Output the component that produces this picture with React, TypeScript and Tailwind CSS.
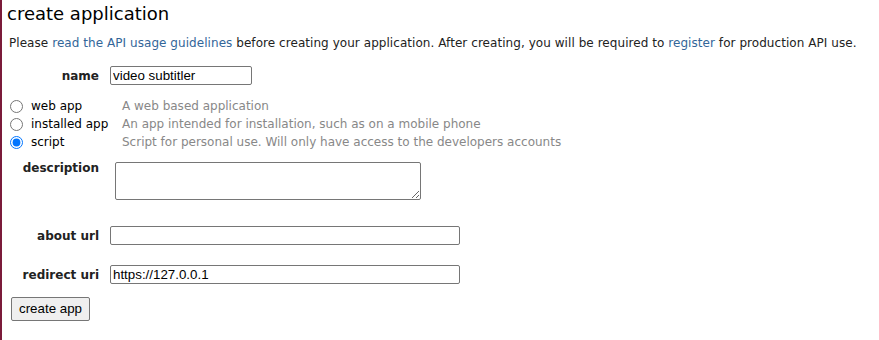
import React from "react";

const label = "w-[97px] shrink-0 text-right text-[12px] font-bold text-[#222]";
const field =
  "h-[19px] border border-[#767676] rounded-[2px] bg-white px-[2px] text-[13.33px] text-black font-['Liberation_Sans',Arial,sans-serif] outline-none";

const kinds = [
  { id: "web", name: "web app", hint: "A web based application" },
  { id: "installed", name: "installed app", hint: "An app intended for installation, such as on a mobile phone" },
  { id: "script", name: "script", hint: "Script for personal use. Will only have access to the developers accounts" },
];

export default function App() {
  return (
    <div className="min-h-[340px] w-[879px] border-l-2 border-[#7b1b3a] bg-white font-['DejaVu_Sans',Verdana,sans-serif] text-[#222]">
      <h1 className="pl-[5px] pt-[3px] text-[18px] leading-[22px] text-black">create application</h1>
      <p className="mt-[11px] pl-[7px] text-[12px] leading-[15px] tracking-[0.055px]">
        Please <a href="#" className="text-[#369]">read the API usage guidelines</a> before creating your
        application. After creating, you will be required to{" "}
        <a href="#" className="text-[#369]">register</a> for production API use.
      </p>

      <div className="mt-[15px] flex items-center gap-[11px]">
        <label className={label}>name</label>
        <input className={`${field} w-[142px]`} defaultValue="video subtitler" />
      </div>

      <div className="mt-[12px] flex flex-col">
        {kinds.map((k) => (
          <div key={k.id} className="flex h-[18px] items-center text-[12px]">
            <input
              type="radio"
              name="kind"
              defaultChecked={k.id === "script"}
              className="ml-[8px] h-[13px] w-[13px] shrink-0 accent-[#0075ff]"
            />
            <span className="ml-[8px] w-[91px] shrink-0 text-black">{k.name}</span>
            <span className="text-[#888]">{k.hint}</span>
          </div>
        ))}
      </div>

      <div className="mt-[8px] flex items-start gap-[16px]">
        <label className={label}>description</label>
        <textarea className="mt-[3px] h-[38px] w-[306px] resize-y border border-[#767676] rounded-[2px] bg-white" />
      </div>

      <div className="mt-[26px] flex items-center gap-[11px]">
        <label className={label}>about url</label>
        <input className={`${field} w-[350px]`} />
      </div>

      <div className="mt-[20px] flex items-center gap-[11px]">
        <label className={label}>redirect uri</label>
        <input className={`${field} w-[350px]`} defaultValue="https://127.0.0.1" />
      </div>

      <button className="ml-[9px] mt-[13px] h-[24px] w-[79px] rounded-[2px] border border-[#767676] bg-[#efefef] text-[13.33px] text-black font-['Liberation_Sans',Arial,sans-serif]">
        create app
      </button>
    </div>
  );
}
